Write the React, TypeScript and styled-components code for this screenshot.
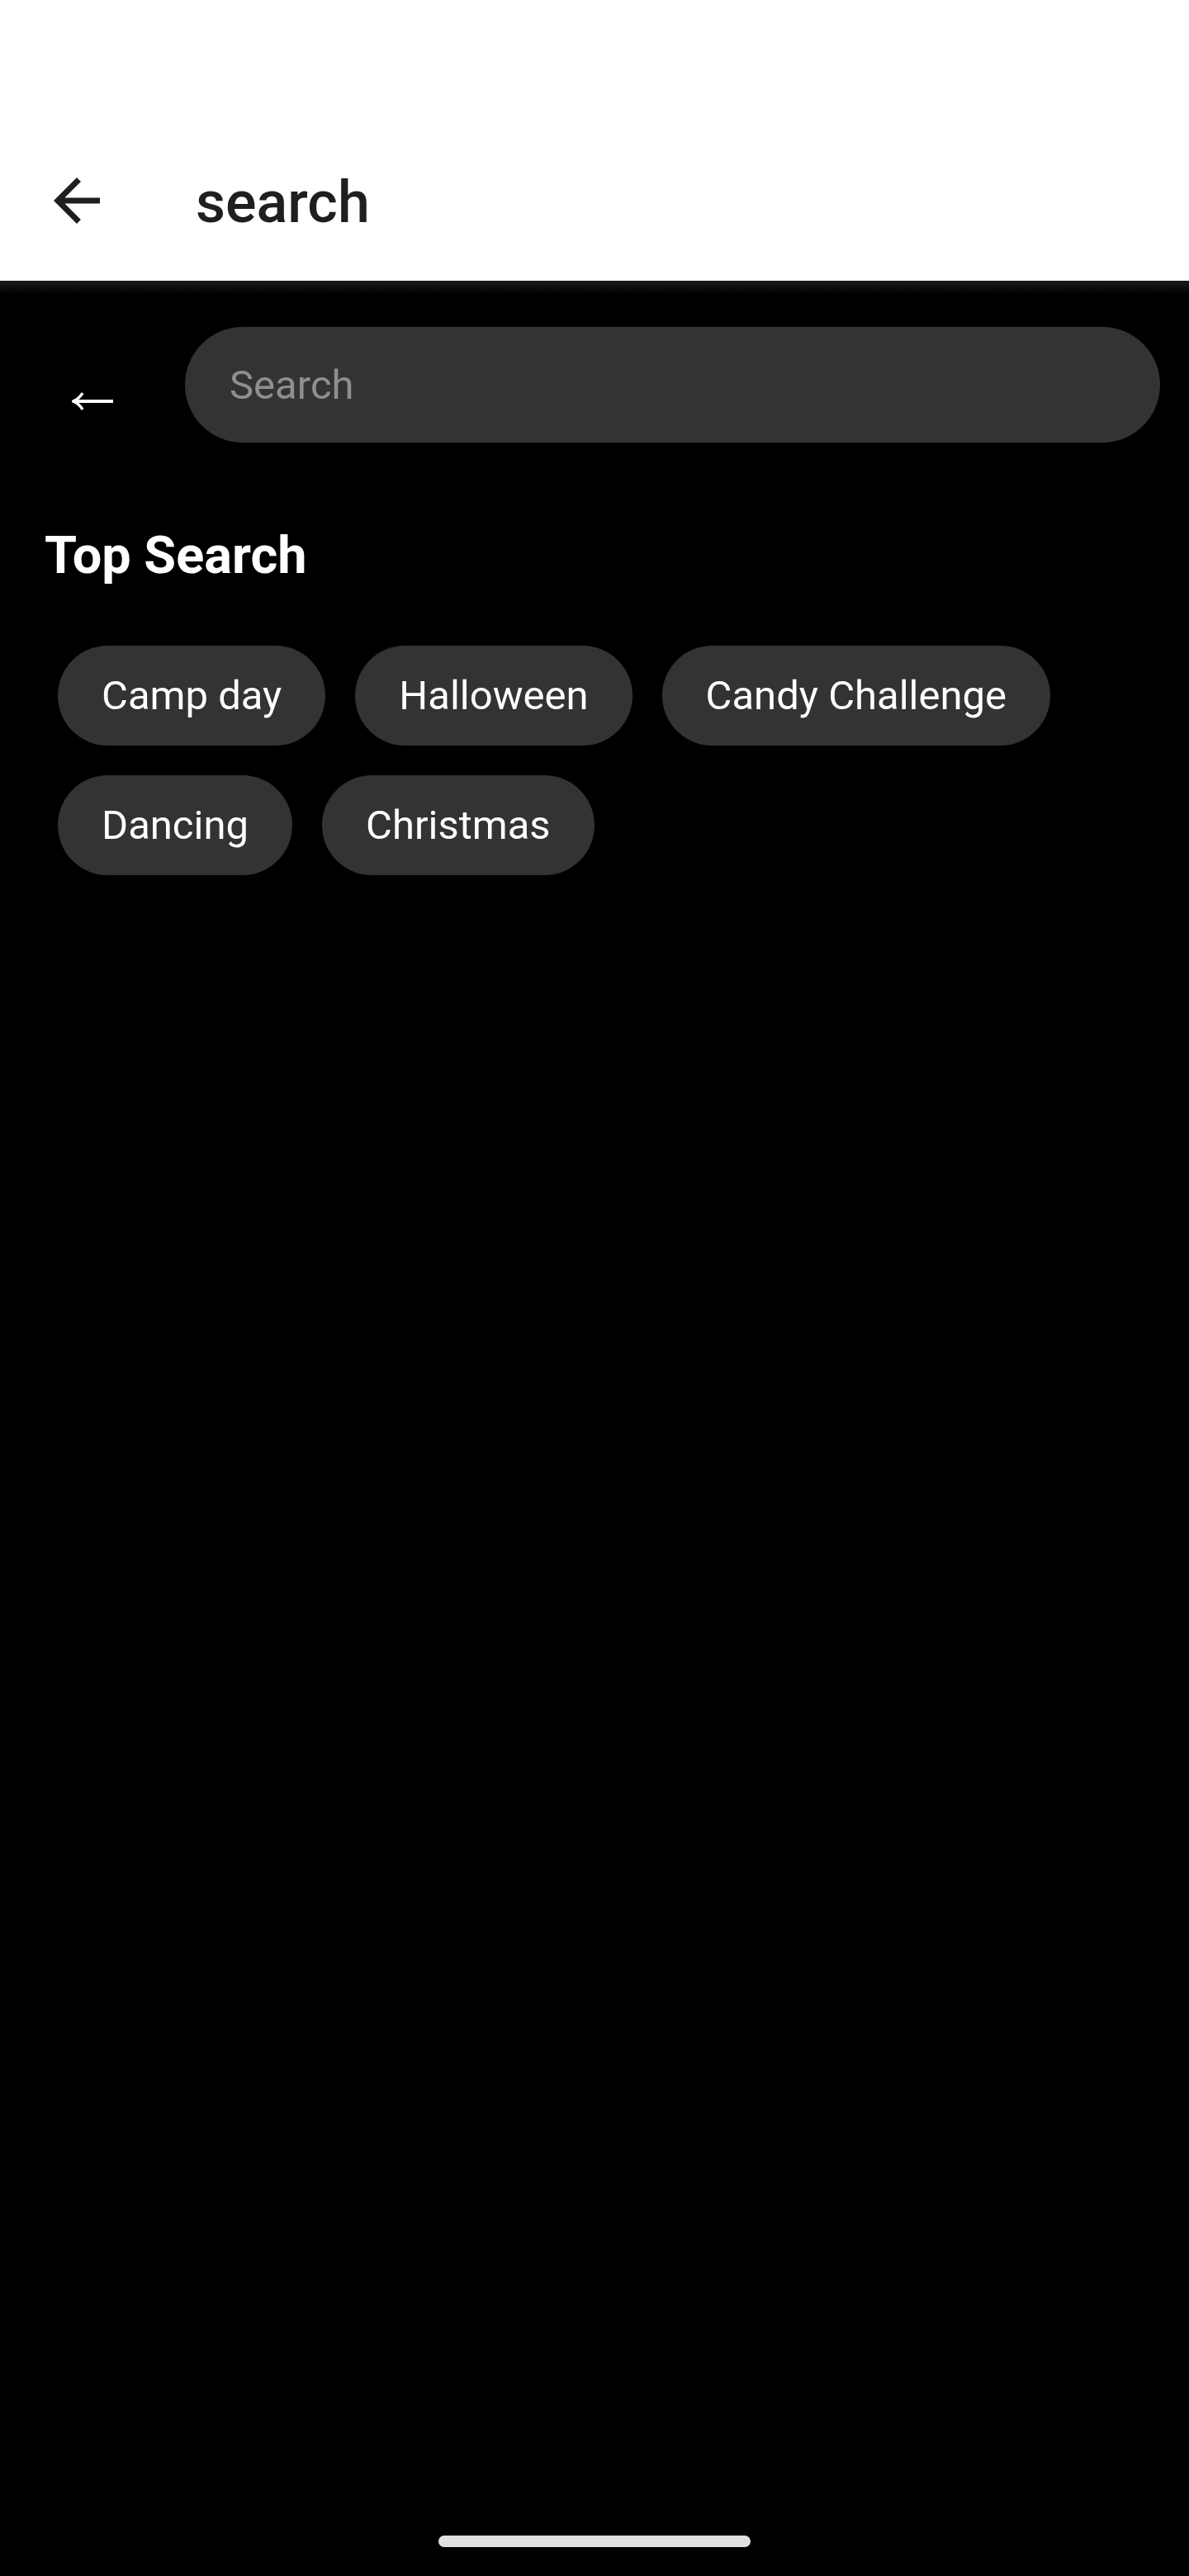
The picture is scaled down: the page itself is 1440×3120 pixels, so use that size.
import React from "react"
import styled, { createGlobalStyle } from "styled-components"

const GlobalStyle = createGlobalStyle`
  * {
    box-sizing: border-box;
  }
  body {
    margin: 0;
    background: #000;
    font-family: Roboto, "Liberation Sans", sans-serif;
  }
`

const Screen = styled.div`
  display: flex;
  flex-direction: column;
  width: 1440px;
  min-height: 3120px;
  background: #000;
`

const Header = styled.header`
  height: 340px;
  padding-top: 170px;
  background: #fff;
`

const Toolbar = styled.div`
  display: flex;
  align-items: center;
  height: 146px;
  padding-left: 51px;
`

const NavIcon = styled.svg`
  width: 84px;
  height: 84px;
  flex-shrink: 0;
  fill: #1f1f1f;
`

const ToolbarTitle = styled.h1`
  margin: 0 0 0 102px;
  padding-top: 4px;
  font-family: Roboto, "Liberation Sans", sans-serif;
  font-size: 70px;
  font-weight: 500;
  color: #1f1f1f;
`

const Content = styled.main`
  flex: 1;
  display: flex;
  flex-direction: column;
  background: linear-gradient(to bottom, #1c1c1c 0px, #000 16px);
`

const SearchRow = styled.div`
  display: flex;
  align-items: flex-start;
  padding: 56px 35px 0 87px;
  gap: 87px;
`

const BackGlyph = styled.svg`
  width: 50px;
  height: 22px;
  margin-top: 79px;
  flex-shrink: 0;
  stroke: #fff;
  fill: none;
`

const SearchInput = styled.input`
  flex: 1;
  height: 140px;
  border: none;
  outline: none;
  border-radius: 70px;
  padding: 0 54px;
  background: #333333;
  color: #fff;
  font-family: Roboto, "Liberation Sans", sans-serif;
  font-size: 49px;

  &::placeholder {
    color: #8f8f8f;
  }
`

const SectionTitle = styled.h2`
  margin: 100px 0 0 54px;
  font-family: Roboto, "Liberation Sans", sans-serif;
  font-size: 63px;
  line-height: 74px;
  font-weight: 700;
  color: #fff;
`

const ChipList = styled.div`
  display: flex;
  flex-wrap: wrap;
  gap: 36px;
  margin-top: 72px;
  padding: 0 35px 0 70px;
`

const Chip = styled.button`
  display: flex;
  align-items: center;
  height: 121px;
  padding: 0 53px;
  border: none;
  border-radius: 61px;
  background: #333333;
  color: #fff;
  font-family: Roboto, "Liberation Sans", sans-serif;
  font-size: 49px;
  font-weight: 400;
`

const HomeIndicator = styled.div`
  align-self: center;
  width: 378px;
  height: 14px;
  margin: auto 0 35px;
  border-radius: 7px;
  background: #e0e0e0;
`

const topSearches = ["Camp day", "Halloween", "Candy Challenge", "Dancing", "Christmas"]

const App = () => {
  return (
    <Screen>
      <GlobalStyle />
      <Header>
        <Toolbar>
          <NavIcon viewBox="0 0 24 24">
            <path d="M20 11H7.83l5.59-5.59L12 4l-8 8 8 8 1.41-1.41L7.83 13H20v-2z" />
          </NavIcon>
          <ToolbarTitle>search</ToolbarTitle>
        </Toolbar>
      </Header>
      <Content>
        <SearchRow>
          <BackGlyph viewBox="0 0 50 22">
            <path d="M3 11H50" strokeWidth="4" />
            <path d="M13 1Q9 8 1.5 11Q9 14 13 21" strokeWidth="3.5" strokeLinejoin="round" />
          </BackGlyph>
          <SearchInput placeholder="Search" readOnly />
        </SearchRow>
        <SectionTitle>Top Search</SectionTitle>
        <ChipList>
          {topSearches.map((item) => (
            <Chip key={item}>{item}</Chip>
          ))}
        </ChipList>
        <HomeIndicator />
      </Content>
    </Screen>
  )
}

export default App
